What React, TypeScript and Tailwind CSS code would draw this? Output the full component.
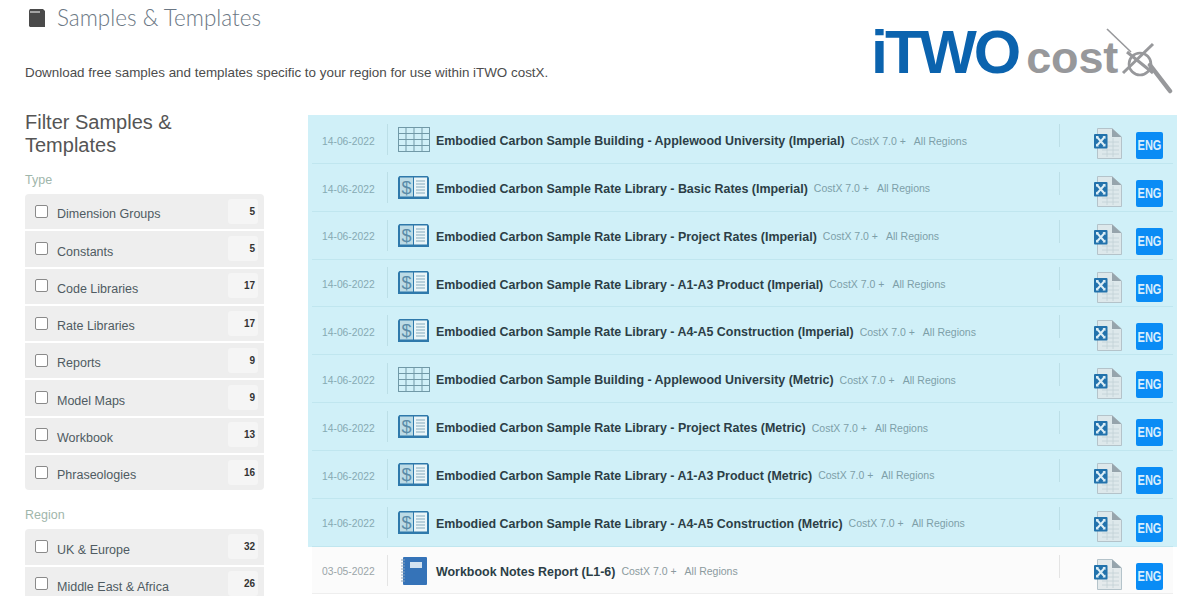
const TYPES = [
  ['Dimension Groups', 5], ['Constants', 5], ['Code Libraries', 17], ['Rate Libraries', 17],
  ['Reports', 9], ['Model Maps', 9], ['Workbook', 13], ['Phraseologies', 16],
] as const

const REGIONS = [['UK & Europe', 32], ['Middle East & Africa', 26]] as const

const ROWS = [
  { icon: 'grid', title: 'Embodied Carbon Sample Building - Applewood University (Imperial)' },
  { icon: 'book', title: 'Embodied Carbon Sample Rate Library - Basic Rates (Imperial)' },
  { icon: 'book', title: 'Embodied Carbon Sample Rate Library - Project Rates (Imperial)' },
  { icon: 'book', title: 'Embodied Carbon Sample Rate Library - A1-A3 Product (Imperial)' },
  { icon: 'book', title: 'Embodied Carbon Sample Rate Library - A4-A5 Construction (Imperial)' },
  { icon: 'grid', title: 'Embodied Carbon Sample Building - Applewood University (Metric)' },
  { icon: 'book', title: 'Embodied Carbon Sample Rate Library - Project Rates (Metric)' },
  { icon: 'book', title: 'Embodied Carbon Sample Rate Library - A1-A3 Product (Metric)' },
  { icon: 'book', title: 'Embodied Carbon Sample Rate Library - A4-A5 Construction (Metric)' },
]

function GridIcon() {
  return (
    <svg width="32" height="25" viewBox="0 0 32 25" fill="none" stroke="#7199a7" strokeWidth="1">
      <rect x="0.5" y="0.5" width="31" height="24" />
      <path d="M8 0.5V24.5M16 0.5V24.5M24 0.5V24.5M0.5 6.5H31.5M0.5 12.5H31.5M0.5 18.5H31.5" />
    </svg>
  )
}

function BookIcon() {
  return (
    <svg width="31" height="24" viewBox="0 0 31 24">
      <path d="M0 1.5 1.5 0H15.5L29.5 0 31 1.5V23H0Z" fill="#2f79ab" />
      <rect x="2" y="1.5" width="13" height="19" fill="#bcdbe6" />
      <rect x="16" y="1.5" width="13" height="19" fill="#eaf5f8" />
      <text x="8.5" y="17.5" textAnchor="middle" fontSize="18" fontFamily="Liberation Sans, sans-serif" fill="#5a8ba8">$</text>
      <path d="M18 5H27M18 8H27M18 11H27M18 14H27M18 17H27" stroke="#86abbd" strokeWidth="1" />
    </svg>
  )
}

function NotebookIcon() {
  return (
    <svg width="26" height="28" viewBox="0 0 26 28">
      <rect x="2" y="0" width="24" height="28" rx="1" fill="#3573b8" />
      <rect x="9" y="5" width="12" height="6" fill="#d3e2f0" />
      <path d="M0 3H4M0 6H4M0 9H4M0 12H4M0 15H4M0 18H4M0 21H4M0 24H4" stroke="#8aa4bb" strokeWidth="1.2" />
    </svg>
  )
}

function FileIcon() {
  return (
    <svg width="28" height="31" viewBox="0 0 28 31">
      <path d="M3.5 0.5H18L27.5 9V30.5H3.5Z" fill="#dfe6e9" fillOpacity="0.85" stroke="#b4c3ca" />
      <path d="M18 0.5V9H27.5Z" fill="#96a4ac" />
      <path d="M8 14H25M8 18H25M8 22H25M8 26H25M13 10V29M19 10V29" stroke="#c2d0d6" strokeWidth="0.8" />
      <rect x="0" y="6" width="13.5" height="14.5" rx="1" fill="#2272ac" />
      <path d="M3 9 10.5 17.5M10.5 9 3 17.5" stroke="#dceef6" strokeWidth="2" />
      <path d="M2 8H5L2 11ZM11.5 8H8.5L11.5 11ZM2 18.5H5L2 15.5ZM11.5 18.5H8.5L11.5 15.5Z" fill="#dceef6" />
    </svg>
  )
}

function Logo() {
  return (
    <div className="flex items-start self-start pt-[25px] pr-[27px]">
      <div className="flex items-baseline pt-px">
        <span className="font-bold text-[61px] leading-[52px] tracking-[-3px] text-[#0b63ae]">iTWO</span>
        <span className="ml-[8px] font-bold text-[45px] leading-[38px] tracking-[-0.2px] text-[#97989b]">cost</span>
      </div>
      <svg width="68" height="68" viewBox="0 0 68 68" className="-ml-[13px] mt-[1px]" fill="none" stroke="#97989b">
        <path d="M2 3 26 26" strokeWidth="1.6" />
        <circle cx="35" cy="38" r="11" strokeWidth="2.6" />
        <path d="M48 18 18 47" strokeWidth="3" />
        <path d="M22 26 48 47" strokeWidth="3" />
        <path d="M45 39 65 65" strokeWidth="4.5" strokeLinecap="round" />
      </svg>
    </div>
  )
}

function FilterGroup({ items }: { items: readonly (readonly [string, number])[] }) {
  return (
    <div className="rounded-[4px] overflow-hidden flex flex-col gap-[2px]">
      {items.map(([label, count]) => (
        <div key={label} className="flex items-center h-[35.3px] bg-[#eeeeee] pl-[10px] pr-[6px]">
          <span className="w-[13px] h-[13px] -mt-px rounded-[2px] border border-[#8a8a8a] bg-white" />
          <span className="ml-[9px] mt-[6px] text-[12.5px] text-[#4f5b62] flex-1">{label}</span>
          <span className="w-[30px] h-[25px] -mt-px rounded-[3px] bg-[#f5f5f5] flex items-center justify-end pr-[3px] text-[10px] font-bold text-[#333]">{count}</span>
        </div>
      ))}
    </div>
  )
}

function Row({ date, icon, title, version, last }: { date: string; icon: React.ReactNode; title: string; version: string; last?: boolean }) {
  const muted = last ? 'text-[#8b9a9e]' : 'text-[#7d9fa8]'
  const rule = last ? 'bg-[#e4e4e4]' : 'bg-[#bcdfe7]'
  return (
    <div className={`flex items-center h-[47.85px] border-b pl-[10px] pr-[10px] pt-[4px] ${last ? 'border-[#eeeeee] bg-[#fbfbfb]' : 'border-[#c0e6ef]'}`}>
      <span className={`w-[53px] text-[10.3px] whitespace-nowrap ${last ? 'text-[#9aa5a8]' : 'text-[#86aab3]'}`}>{date}</span>
      <span className={`ml-[12px] w-px h-[31px] -mt-[4px] ${rule}`} />
      <span className="ml-[9px] w-[33px] -mt-[3px] flex justify-center">{icon}</span>
      <span className="ml-[6px] text-[12.45px] font-bold text-[#2c3e46] whitespace-nowrap">{title}</span>
      <span className={`ml-[6px] text-[10.5px] whitespace-nowrap ${muted}`}>{version}</span>
      <span className={`ml-[8px] text-[10.5px] whitespace-nowrap ${muted}`}>All Regions</span>
      <span className={`ml-auto w-px h-[23px] -mt-[12px] ${rule}`} />
      <span className="ml-[34px] mt-[5px]"><FileIcon /></span>
      <span className="ml-[14px] mt-[8px] w-[27px] h-[27px] rounded-[2px] bg-[#0a8cf5] flex items-center justify-center text-[11px] font-bold text-[#d8eefc]">
        <span className="inline-block scale-y-125">ENG</span>
      </span>
    </div>
  )
}

export default function App() {
  return (
    <div className="h-screen overflow-hidden bg-white font-['Liberation_Sans',sans-serif]">
      <div className="flex justify-between h-[115px]">
        <div className="pl-[25px]">
          <div className="flex items-start pt-[3px] pl-[4px]">
            <svg width="16" height="18" viewBox="0 0 16 18" className="mt-[6px]">
              <path d="M0 1.5 1 0H14L16 2V18H1L0 17Z" fill="#4a4a4a" />
              <path d="M1 3H11" stroke="#ffffff" strokeWidth="1" />
            </svg>
            <h1 className="ml-[12px] font-['Lato',sans-serif] font-light text-[22.5px] leading-[30px] text-[#6b7784]">Samples &amp; Templates</h1>
          </div>
          <p className="mt-[30px] text-[13.4px] text-[#4c4c4c] leading-[20px]">Download free samples and templates specific to your region for use within iTWO costX.</p>
        </div>
        <Logo />
      </div>
      <div className="flex pl-[25px]">
        <aside className="w-[239px] flex-shrink-0">
          <h2 className="text-[20px] leading-[23px] text-[#555555] -mt-[4px]">Filter Samples &amp; Templates</h2>
          <h3 className="mt-[14px] text-[12.5px] leading-[18px] text-[#9fb6ab]">Type</h3>
          <div className="mt-[5px]"><FilterGroup items={TYPES} /></div>
          <h3 className="mt-[16px] text-[12.5px] leading-[18px] text-[#9fb6ab]">Region</h3>
          <div className="mt-[5px]"><FilterGroup items={REGIONS} /></div>
        </aside>
        <main className="ml-[44px] w-[869px]">
          <div className="bg-[#d0f0f8] px-[4px] pt-px">
            {ROWS.map(row => (
              <Row key={row.title} date="14-06-2022" icon={row.icon === 'grid' ? <GridIcon /> : <BookIcon />} title={row.title} version="CostX 7.0 +" />
            ))}
          </div>
          <div className="px-[4px]">
            <Row last date="03-05-2022" icon={<NotebookIcon />} title="Workbook Notes Report (L1-6)" version="CostX 7.0 +" />
          </div>
        </main>
      </div>
    </div>
  )
}
